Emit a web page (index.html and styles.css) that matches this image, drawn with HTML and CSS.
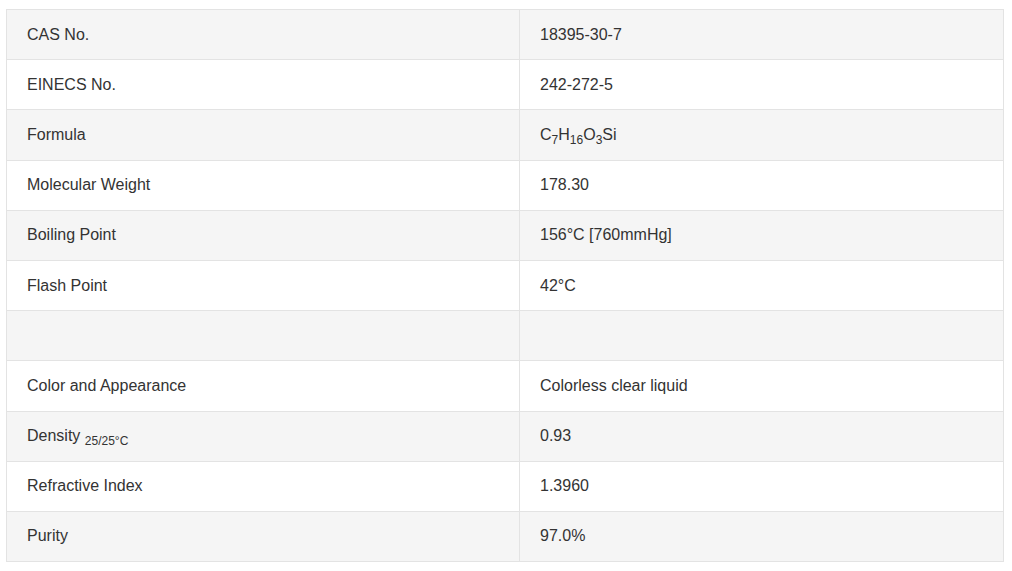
FILE: index.html
```html
<!DOCTYPE html>
<html>
<head>
<meta charset="utf-8">
<link rel="stylesheet" href="styles.css">
</head>
<body>
<table class="spec">
<tbody>
<tr><td class="k">CAS No.</td><td class="v">18395-30-7</td></tr>
<tr><td class="k">EINECS No.</td><td class="v">242-272-5</td></tr>
<tr><td class="k">Formula</td><td class="v">C<sub>7</sub>H<sub>16</sub>O<sub>3</sub>Si</td></tr>
<tr><td class="k">Molecular Weight</td><td class="v">178.30</td></tr>
<tr><td class="k">Boiling Point</td><td class="v">156°C [760mmHg]</td></tr>
<tr><td class="k">Flash Point</td><td class="v">42°C</td></tr>
<tr><td class="k"></td><td class="v"></td></tr>
<tr><td class="k">Color and Appearance</td><td class="v">Colorless clear liquid</td></tr>
<tr><td class="k">Density <sub class="small">25/25°C</sub></td><td class="v">0.93</td></tr>
<tr><td class="k">Refractive Index</td><td class="v">1.3960</td></tr>
<tr><td class="k">Purity</td><td class="v">97.0%</td></tr>
</tbody>
</table>
</body>
</html>
```
FILE: styles.css
```css
html, body {
  margin: 0;
  background: #fff;
}
body {
  padding: 9px 8px 0 6px;
  font-family: "Liberation Sans", Arial, sans-serif;
  font-size: 16px;
  color: #333;
}
.spec {
  width: 998px;
  border-collapse: collapse;
  table-layout: fixed;
}
.spec td {
  border: 1px solid #e3e3e3;
  height: 50.2px;
  padding: 0 20px;
  vertical-align: middle;
  box-sizing: border-box;
}
.spec td.k {
  width: 513px;
}
.spec tr:nth-child(odd) td {
  background: #f5f5f5;
}
.spec sub {
  font-size: 12px;
  line-height: 0;
  vertical-align: -4px;
}
.spec sub.small {
  font-size: 12px;
  vertical-align: -4px;
}
```
